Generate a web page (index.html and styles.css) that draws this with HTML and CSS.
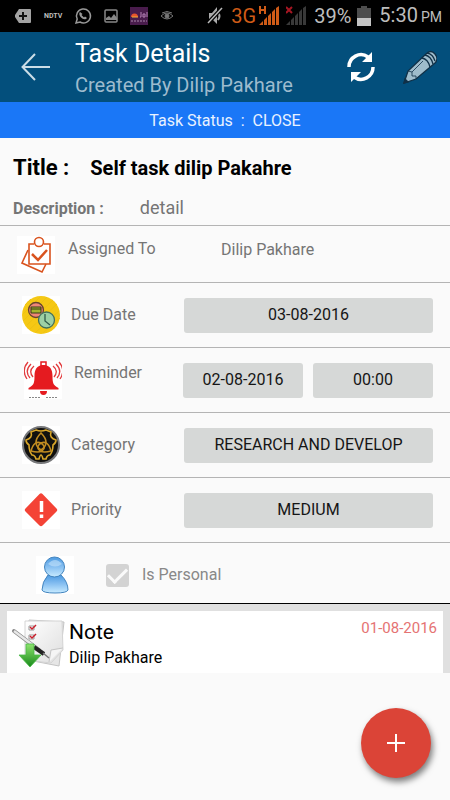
FILE: index.html
```html
<!DOCTYPE html>
<html lang="en">
<head>
<meta charset="utf-8">
<meta name="viewport" content="width=device-width, initial-scale=1">
<title>Task Details</title>
<link rel="stylesheet" href="styles.css">
</head>
<body>
<div class="statusbar">
  <div class="notices">
    <svg width="18" height="16" viewBox="0 0 18 16"><path d="M5 1h11q1 0 1 1v12q0 1-1 1H5L1 9V7z" fill="#a3a3a3"/><path d="M9 4v8M5 8h8" stroke="#111" stroke-width="2"/></svg>
    <span class="carrier">NDTV</span>
    <svg width="18" height="18" viewBox="0 0 18 18" fill="none"><path d="M2 16l1.200-4A7 7 0 1 1 6 15z" stroke="#999" stroke-width="1.500"/><path d="M6 5c-3 3 4 10 7 6l-2-1.500-1 1-2.500-2.500 1-1z" fill="#999"/></svg>
    <svg width="14" height="14" viewBox="0 0 14 14"><rect x="1" y="1" width="12" height="12" rx="1" fill="none" stroke="#888" stroke-width="1.500"/><path d="M2 11V9l3-2 2 2 3-4 3 4v2z" fill="#888"/></svg>
    <svg class="app" width="18" height="18" viewBox="0 0 18 18"><rect width="18" height="18" fill="#491c4c"/><path d="M1 10a3 3 0 0 1 7 0z" fill="#e8552c"/><path d="M2 10h6" stroke="#eeb43b"/><path d="M11 5v5h-1M13 7h2v3h-2zM17 5v5" fill="none" stroke="#b783b7"/><path d="M1 14h16" stroke="#a987aa" stroke-dasharray="2 1"/></svg>
    <svg width="14" height="10" viewBox="0 0 14 10" fill="none" stroke="#777"><path d="M1 5Q7-1 13 5Q7 11 1 5zM2 2Q7-1 12 2"/><circle cx="7" cy="5" r="2" fill="#777"/></svg>
  </div>
  <div class="system">
    <svg width="16" height="20" viewBox="0 0 16 20"><path d="M2 7h3l5-6v17l-5-5H2z" fill="#aaa"/><path d="M11 7q3 3 0 7" fill="none" stroke="#aaa" stroke-width="2"/><path d="M1 17L15 2" stroke="#000" stroke-width="4"/><path d="M1 17L15 2" stroke="#bbb" stroke-width="1.500"/></svg>
    <span class="network">3G</span>
    <svg width="21" height="20" viewBox="0 0 21 20" fill="#cf5b17"><path d="M0 19l4-4v4zM5 14l3-3v8H5zM9 10l3-3v12H9zM13 6l3-3v16h-3zM17 2l3-2v19h-3z"/><path d="M1 0v8M6 0v8M0 4h6" stroke="#cf5b17" stroke-width="2"/></svg>
    <svg class="nosim" width="20" height="20" viewBox="0 0 20 20" fill="#393939"><path d="M0 19l4-4v4zM5 14l3-3v8H5zM9 10l3-3v12H9zM13 6l3-3v16h-3zM17 2l3-2v19h-3z"/><path d="M0 1l6 6M6 1L0 7" stroke="#a51622" stroke-width="2"/></svg>
    <span class="percent">39%</span>
    <svg width="14" height="20" viewBox="0 0 14 20"><path d="M4 0h6v2h4v10H0V2h4z" fill="#4d4d4d"/><path d="M0 12h14v8H0z" fill="#c4c4c4"/></svg>
    <span class="time">5:30<small>PM</small></span>
  </div>
</div>
<header class="appbar">
  <button class="iconbtn" aria-label="Back"><svg width="30" height="28" viewBox="0 0 30 28" fill="none" stroke="#cbdde7" stroke-width="2"><path d="M14 1L1.500 14 14 27M2 14h27"/></svg></button>
  <div class="heading"><h1>Task Details</h1><p>Created By Dilip Pakhare</p></div>
  <button class="iconbtn" aria-label="Refresh"><svg width="28" height="30" viewBox="0 0 28 30"><g fill="none" stroke="#fff" stroke-width="3.500"><path d="M2 15A12 12 0 0 1 21 5"/><path d="M26 15A12 12 0 0 1 7 25"/></g><path d="M25 0v10H15zM4 30V20h10z" fill="#fff"/></svg></button>
  <button class="iconbtn" aria-label="Edit"><svg width="34" height="34" viewBox="0 0 34 34" fill="#9fbccb" stroke="#103047" stroke-width="1.300"><path d="M1 33L5 21 23 4q5-5 9 0t0 9L13 29z"/><path d="M5 21l4 1 0 4 4 0 0 3M9 22L20 11" fill="none" stroke-width=".8"/><path d="M19 8q6 1 8 9M22 5q6 1 8 9M24 3q6 1 8 8" fill="none"/><path d="M1 33l1-4 3 3z" fill="#103047"/></svg></button>
</header>
<p class="strip">Task Status&nbsp; :&nbsp; CLOSE</p>
<main>
  <section class="summary">
    <div class="title"><span>Title :</span><h2>Self task dilip Pakahre</h2></div>
    <div class="description"><strong>Description :</strong><span>detail</span></div>
  </section>
  <section class="row assigned">
    <div class="lead">
      <svg class="icon" viewBox="0 0 38 38" fill="none" stroke="#d9531e" stroke-width="1.600"><rect width="38" height="38" fill="#fff" stroke="none"/><path d="M11 14L5 27l20 9 4-8"/><path d="M17 8h-5v20h21V8h-6"/><circle cx="22" cy="6" r="4.500"/><path d="M15 18l6 6 9-10" stroke-width="2.500"/></svg>
      <span>Assigned To</span>
    </div>
    <span class="person">Dilip Pakhare</span>
  </section>
  <section class="row">
    <div class="lead">
      <svg class="icon" viewBox="0 0 38 38"><rect width="38" height="38" fill="#fff"/><circle cx="19" cy="19" r="19" fill="#f5c814"/><path d="M3 9L9 3M1 18L18 1M1 25L25 1M5 29L31 4M8 33L35 8M14 36L37 15M21 37L38 22" stroke="#ecc012" stroke-width=".8"/><circle cx="14" cy="14" r="7.500" fill="#ee8778" stroke="#67452e" stroke-width="1.300"/><path d="M9 11h10v6H9z" fill="#a4b52e" stroke="#363a18"/><path d="M9 13h10" stroke="#363a18"/><circle cx="24.500" cy="24" r="8" fill="#9dd0a4" stroke="#44705a" stroke-width="1.300"/><path d="M23 18v7l5 4" fill="none" stroke="#315a4a" stroke-width="1.300"/></svg>
      <span id="due">Due Date</span>
    </div>
    <div class="values"><button aria-describedby="due">03-08-2016</button></div>
  </section>
  <section class="row reminder">
    <div class="lead">
      <svg class="icon" viewBox="0 0 38 38"><rect width="38" height="38" fill="#fff"/><path d="M17 1h5v4h-5z" fill="none" stroke="#e51b20" stroke-width="1.500"/><path d="M19.500 4c7 0 9 5 9 11 0 8 1 9 6 12v1.500h-30V27c5-3 6-4 6-12 0-6 2-11 9-11zM16 30h7q0 4-3.500 4t-3.500-4z" fill="#e51b20"/><g fill="none" stroke="#e23c3e" stroke-width="1.300"><path d="M10 5q-6 5-1 11M7 3q-7 7-1 14M4 1q-7 8-1 17M29 5q6 5 1 11M32 3q7 7 1 14M35 1q7 8 1 17"/></g><path d="M5 36.500h12M22 36.500h12" stroke="#888" stroke-dasharray="2 1"/></svg>
      <span id="rem">Reminder</span>
    </div>
    <div class="values"><button aria-describedby="rem">02-08-2016</button><button aria-describedby="rem">00:00</button></div>
  </section>
  <section class="row">
    <div class="lead">
      <svg class="icon" viewBox="0 0 38 38"><rect width="38" height="38" fill="#fff"/><circle cx="19" cy="19" r="18" fill="#11110f" stroke="#77787a" stroke-width="2"/><path d="M14 4Q19 6 24 4L29 6Q27 12 34 14Q34 17 31 19Q31 25 28 29Q25 29 24 33H21Q20 29 19 29T17 33H14Q13 29 10 29Q7 25 7 19Q4 17 4 14Q11 12 9 6z" fill="none" stroke="#d8a62a" stroke-width="1.600"/><g fill="none" stroke="#c18c21" stroke-width="1.600"><path d="M19 7Q9 17 19 24Q29 17 19 7z"/><path d="M9 25Q12 14 19 17Q25 21 20 25Q16 27 9 25z"/><path d="M29 25Q26 14 19 17Q13 21 18 25Q22 27 29 25z"/></g></svg>
      <span id="cat">Category</span>
    </div>
    <div class="values"><button aria-describedby="cat">RESEARCH AND DEVELOP</button></div>
  </section>
  <section class="row">
    <div class="lead">
      <svg class="icon" viewBox="0 0 38 38"><rect width="38" height="38" fill="#fff"/><path d="M17.500 3q1.500-1.500 3 0l14 14.500q1.500 1.500 0 3l-14 14q-1.500 1.500-3 0l-14-14q-1.500-1.500 0-3z" fill="#f44336"/><path d="M19.500 10v11M19.500 23.500v3.500" stroke="#fff" stroke-width="3.500"/></svg>
      <span id="pri">Priority</span>
    </div>
    <div class="values"><button aria-describedby="pri">MEDIUM</button></div>
  </section>
  <section class="row personal">
    <svg class="icon" viewBox="0 0 38 38"><defs><linearGradient id="blue" x1="0" y1="0" x2="0" y2="1"><stop offset="0" stop-color="#4c9ae1"/><stop offset=".45" stop-color="#82bcf0"/><stop offset="1" stop-color="#c8ebff"/></linearGradient></defs><rect width="38" height="38" fill="#fff"/><g fill="url(#blue)" stroke="#4385bf"><path d="M12 19Q19 22 25 19Q32 26 32 34Q31 37 19 37T6 34Q6 26 12 19z"/><circle cx="18.500" cy="11" r="10"/></g><path d="M12 8q7-8 14 0-7 5-14 0z" fill="#c5e2fa" opacity=".6"/></svg>
    <label><input type="checkbox" checked disabled><span>Is Personal</span></label>
  </section>
  <section class="notes">
    <article>
      <svg width="54" height="50" viewBox="0 0 54 50"><defs><linearGradient id="page" x1="0" y1="0" x2="1" y2="1"><stop offset="0" stop-color="#fff"/><stop offset="1" stop-color="#dedede"/></linearGradient><linearGradient id="green" x1="0" y1="0" x2="0" y2="1"><stop offset="0" stop-color="#8ee36e"/><stop offset="1" stop-color="#17891a"/></linearGradient></defs><path d="M18 2l35 2-5 44-31-6z" fill="#e6e6e6" stroke="#c4c4c4"/><path d="M14 3h37l1 29-12 13-26-3z" fill="url(#page)" stroke="#d4d4d4"/><path d="M52 30l-12 2-2 12" fill="#f5f5f5" stroke="#c4c4c4"/><path d="M18 8h5v4h-5zM18 17h5v4h-5z" fill="#fff" stroke="#999"/><path d="M19 9l2 2 4-4M19 18l2 2 4-4" fill="none" stroke="#c8202c" stroke-width="1.500"/><path d="M3 13L28 32" stroke="#888" stroke-width="4" stroke-linecap="round"/><path d="M3 13L27 31" stroke="#e8e8e8" stroke-width="2.500"/><path d="M23 29l10 7" stroke="#222" stroke-width="4"/><path d="M32 35l6 5" stroke="#777" stroke-width="1.500"/><path d="M15 26h8v11h7L19 49 8 37h7z" fill="url(#green)" stroke="#46b944" stroke-width=".8"/></svg>
      <div class="note"><h3>Note</h3><p>Dilip Pakhare</p></div>
      <time datetime="2016-08-01">01-08-2016</time>
    </article>
  </section>
</main>
<button class="fab" aria-label="Add note"><svg width="18" height="18" viewBox="0 0 18 18"><path d="M9 0v18M0 9h18" stroke="#fff" stroke-width="2"/></svg></button>
</body>
</html>
```
FILE: styles.css
```css
* { box-sizing: border-box; }
body {
  margin: 0;
  min-height: 100vh;
  background: #fafafa;
  color: #757575;
  font: 16px/20px Roboto, sans-serif;
}
h1, h2, h3, p { margin: 0; font-weight: 400; }
svg { display: block; flex: none; }
button { font: inherit; border: 0; padding: 0; cursor: pointer; }

.statusbar {
  display: flex;
  justify-content: space-between;
  height: 32px;
  padding: 0 8px 0 14px;
  background: #000;
  color: #bdbdbd;
}
.notices, .system { display: flex; align-items: center; }
.notices { gap: 12px; }
.carrier { font-size: 7px; font-weight: 700; }
.system { gap: 6px; font-size: 20px; }
.network { margin: 0 -3px 0 2px; color: #cf5b17; }
.nosim { margin-right: 2px; }
.time { margin-left: 2px; }
.time small { margin-left: 3px; font-size: 14px; }

.appbar {
  display: flex;
  align-items: center;
  gap: 28px;
  height: 70px;
  padding: 0 13px 0 21px;
  background: #034f7c;
}
.iconbtn { background: none; }
.heading { flex: 1; margin-left: -4px; padding-top: 4px; white-space: nowrap; }
h1 { color: #fff; font-size: 25px; line-height: 32px; }
.heading p { color: #9dbbce; font-size: 20px; line-height: 30px; }
.strip {
  padding-top: 1px;
  background: #1a77f7;
  color: #e9f2ff;
  line-height: 35px;
  text-align: center;
}

.summary {
  height: 88px;
  padding: 16px 13px 0;
  border-bottom: 1px solid #b4b4b4;
}
.title { display: flex; align-items: baseline; gap: 21px; color: #000; line-height: 28px; }
.title span { font-size: 22px; font-weight: 700; }
h2 { font-size: 20px; font-weight: 700; }
.description { display: flex; align-items: baseline; gap: 36px; margin-top: 16px; }
.description span { font-size: 18px; }

.row {
  display: flex;
  align-items: center;
  height: 65px;
  padding: 0 17px 0 22px;
  border-bottom: 1px solid #b4b4b4;
}
.lead { display: flex; align-items: center; gap: 11px; flex: 0 0 162px; }
.icon { width: 38px; height: 38px; }
.values { display: flex; flex: 1; gap: 10px; }
.values button {
  flex: 1;
  height: 35px;
  border-radius: 3px;
  background: #d6d8d7;
  color: #151515;
}
.assigned { height: 57px; padding: 2px 17px 0; }
.assigned .lead { flex-basis: 204px; gap: 13px; }
.assigned span { align-self: flex-start; }
.assigned .lead span { margin-top: 3px; }
.person { margin-top: 12px; }
.reminder { padding-left: 24px; }
.reminder .lead { flex-basis: 159px; gap: 12px; }
.reminder .lead span { align-self: flex-start; margin-top: 2px; }
.personal { height: 61px; padding: 4px 17px 0 36px; gap: 32px; border-color: #000; }
.personal label { display: flex; align-items: center; gap: 13px; color: #888; }
.personal input {
  appearance: none;
  width: 23px;
  height: 23px;
  margin: 0;
  border-radius: 3px;
  background: #d3d3d3;
  display: grid;
  place-items: center;
}
.personal input::before {
  content: "";
  width: 16px;
  height: 8px;
  border: solid #fafafa;
  border-width: 0 0 3px 3px;
  transform: translateY(-2px) rotate(-45deg);
}

.notes { padding: 7px 7px 0; background: #e0e0e0; }
article { display: flex; height: 62px; padding: 7px 6px 0 4px; background: #fff; }
.note { flex: 1; margin-left: 4px; color: #000; }
h3 { font-size: 21px; line-height: 29px; }
.note p { line-height: 22px; }
time { color: #e57373; font-size: 15px; }

.fab {
  position: fixed;
  right: 19px;
  bottom: 22px;
  display: grid;
  place-items: center;
  width: 70px;
  height: 70px;
  border-radius: 50%;
  background: #db4437;
  box-shadow: 2px 4px 6px rgba(0, 0, 0, .5);
}
```
